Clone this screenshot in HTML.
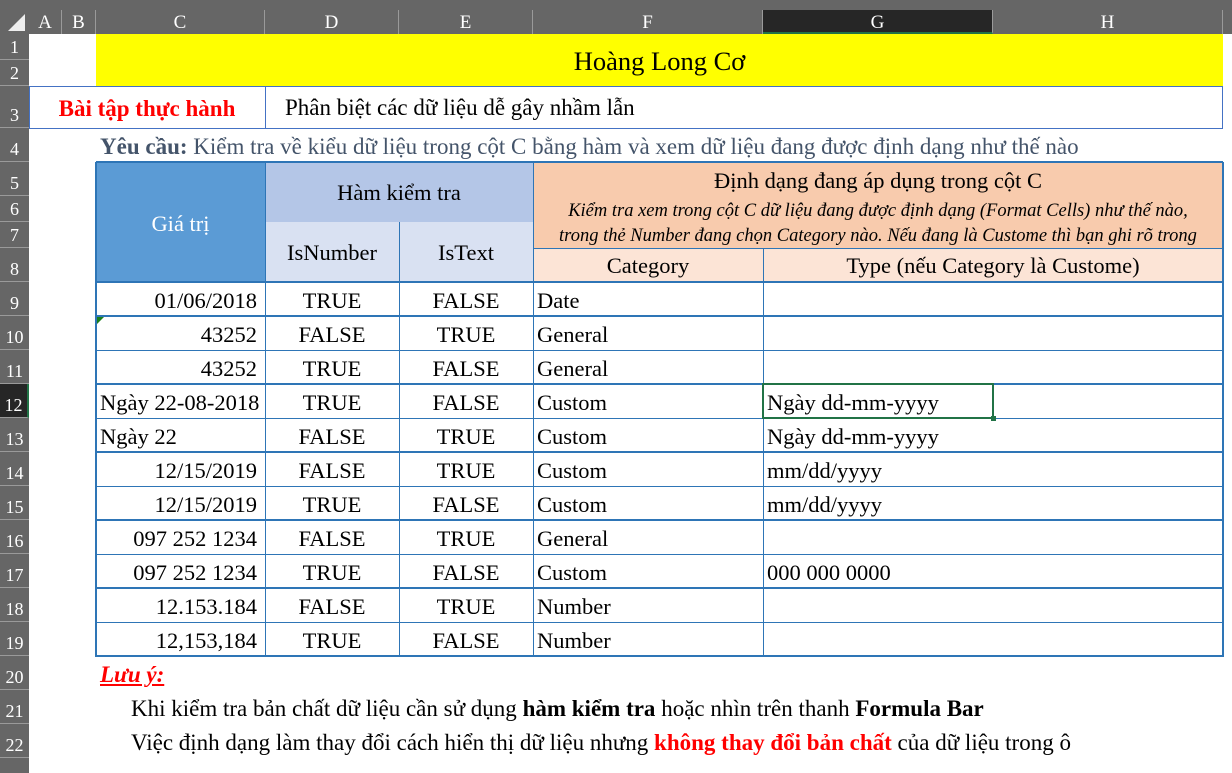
<!DOCTYPE html>
<html><head><meta charset="utf-8"><style>
html,body{margin:0;width:1232px;height:773px;overflow:hidden;}
body{background:#fff;position:relative;font-family:"Liberation Serif",serif;}
div{position:absolute;box-sizing:border-box;}
.ch{top:10px;height:24px;color:#fff;font-size:19px;text-align:center;line-height:26px;border-right:1px solid #9a9a9a;}
.rh{left:0;width:29px;color:#fff;font-size:18px;text-align:center;border-bottom:1px solid #9a9a9a;display:flex;align-items:flex-end;justify-content:center;padding-bottom:1px;}
.c{font-size:22.5px;color:#000;line-height:36px;white-space:nowrap;}
.ctr{text-align:center;}
.r{text-align:right;padding-right:8px;}
.l{padding-left:4px;}
.hl{left:96px;width:1127px;background:#2e75b6;}
.vl{width:1px;background:#2e75b6;}
</style></head><body>
<div style="left:0;top:0;width:1232px;height:34px;background:#666;"></div>
<div style="left:0;top:0;width:29px;height:773px;background:#666;"></div>
<svg style="position:absolute;left:8px;top:14px" width="18" height="18"><polygon points="17,0 17,17 0,17" fill="#eee"/></svg>
<div class="ch" style="left:29px;width:33px;">A</div>
<div class="ch" style="left:62px;width:34px;">B</div>
<div class="ch" style="left:96px;width:169px;">C</div>
<div class="ch" style="left:265px;width:134px;">D</div>
<div class="ch" style="left:399px;width:134px;">E</div>
<div class="ch" style="left:533px;width:230px;">F</div>
<div class="ch" style="left:763px;width:230px;background:#262626;border-bottom:2px solid #217346;">G</div>
<div class="ch" style="left:993px;width:230px;">H</div>
<div class="rh" style="top:34px;height:26px">1</div>
<div class="rh" style="top:60px;height:26px">2</div>
<div class="rh" style="top:86px;height:42px">3</div>
<div class="rh" style="top:128px;height:34px">4</div>
<div class="rh" style="top:162px;height:34px">5</div>
<div class="rh" style="top:196px;height:26px">6</div>
<div class="rh" style="top:222px;height:26px">7</div>
<div class="rh" style="top:248px;height:34px">8</div>
<div class="rh" style="top:282px;height:34px">9</div>
<div class="rh" style="top:316px;height:34px">10</div>
<div class="rh" style="top:350px;height:34px">11</div>
<div class="rh" style="top:384px;height:34px;background:#262626;border-right:2px solid #217346">12</div>
<div class="rh" style="top:418px;height:34px">13</div>
<div class="rh" style="top:452px;height:34px">14</div>
<div class="rh" style="top:486px;height:34px">15</div>
<div class="rh" style="top:520px;height:34px">16</div>
<div class="rh" style="top:554px;height:34px">17</div>
<div class="rh" style="top:588px;height:34px">18</div>
<div class="rh" style="top:622px;height:34px">19</div>
<div class="rh" style="top:656px;height:34px">20</div>
<div class="rh" style="top:690px;height:34px">21</div>
<div class="rh" style="top:724px;height:34px">22</div>
<div class="rh" style="top:758px;height:15px;border-bottom:none"></div>

<div class="c ctr" style="left:96px;top:34px;width:1127px;height:52px;background:#ff0;font-size:26.5px;line-height:54px;">Hoàng Long Cơ</div>
<div style="left:29px;top:86px;width:1194px;height:43px;border:1px solid #4472c4;"></div>
<div style="left:265px;top:86px;width:1px;height:42px;background:#4472c4;"></div>
<div class="c ctr" style="left:29px;top:86px;width:236px;line-height:46px;color:#f00;font-weight:bold;font-size:23px;">Bài tập thực hành</div>
<div class="c" style="left:285px;top:86px;line-height:44px;font-size:23px;">Phân biệt các dữ liệu dễ gây nhầm lẫn</div>
<div class="c" style="left:100px;top:129px;line-height:36px;color:#44546a;font-size:23px;"><b>Yêu cầu:</b> Kiểm tra về kiểu dữ liệu trong cột C bằng hàm và xem dữ liệu đang được định dạng như thế nào</div>

<div class="c ctr" style="left:96px;top:162px;width:169px;height:120px;background:#5b9bd5;color:#fff;line-height:124px;">Giá trị</div>
<div class="c ctr" style="left:265px;top:162px;width:268px;height:60px;background:#b4c6e7;line-height:62px;">Hàm kiểm tra</div>
<div class="c ctr" style="left:265px;top:222px;width:134px;height:60px;background:#d9e1f2;line-height:62px;">IsNumber</div>
<div class="c ctr" style="left:399px;top:222px;width:134px;height:60px;background:#d9e1f2;line-height:62px;">IsText</div>
<div style="left:533px;top:162px;width:690px;height:86px;background:#f8cbad;"></div>
<div class="c ctr" style="left:533px;top:164px;width:690px;line-height:34px;">Định dạng đang áp dụng trong cột C</div>
<div class="c ctr" style="left:533px;top:198px;width:690px;line-height:26px;font-size:18.5px;font-style:italic;">Kiểm tra xem trong cột C dữ liệu đang được định dạng (Format Cells) như thế nào,</div>
<div class="c ctr" style="left:533px;top:223px;width:690px;line-height:26px;font-size:18.5px;font-style:italic;">trong thẻ Number đang chọn Category nào. Nếu đang là Custome thì bạn ghi rõ trong</div>
<div class="c ctr" style="left:533px;top:248px;width:230px;height:34px;background:#fce4d6;">Category</div>
<div class="c ctr" style="left:763px;top:248px;width:460px;height:34px;background:#fce4d6;">Type (nếu Category là Custome)</div>

<div class="hl" style="top:161px;height:2px"></div>
<div class="hl" style="left:533px;width:690px;top:248px;height:1px"></div>
<div class="hl" style="top:281px;height:2px"></div>
<div class="hl" style="top:315px;height:2px"></div>
<div class="hl" style="top:350px;height:1px"></div>
<div class="hl" style="top:383px;height:2px"></div>
<div class="hl" style="top:418px;height:1px"></div>
<div class="hl" style="top:451px;height:2px"></div>
<div class="hl" style="top:486px;height:1px"></div>
<div class="hl" style="top:519px;height:2px"></div>
<div class="hl" style="top:554px;height:1px"></div>
<div class="hl" style="top:587px;height:2px"></div>
<div class="hl" style="top:622px;height:1px"></div>
<div class="hl" style="top:655px;height:2px"></div>
<div class="vl" style="left:95px;top:162px;height:495px;width:2px"></div>
<div class="vl" style="left:265px;top:162px;height:495px"></div>
<div class="vl" style="left:399px;top:222px;height:435px"></div>
<div class="vl" style="left:533px;top:162px;height:495px"></div>
<div class="vl" style="left:763px;top:248px;height:409px"></div>
<div class="vl" style="left:1222px;top:162px;height:495px;width:2px"></div>

<div class="c r" style="left:96px;top:283px;width:169px">01/06/2018</div>
<div class="c r" style="left:96px;top:317px;width:169px">43252</div>
<div class="c r" style="left:96px;top:351px;width:169px">43252</div>
<div class="c l" style="left:96px;top:385px;width:169px">Ngày 22-08-2018</div>
<div class="c l" style="left:96px;top:419px;width:169px">Ngày 22</div>
<div class="c r" style="left:96px;top:453px;width:169px">12/15/2019</div>
<div class="c r" style="left:96px;top:487px;width:169px">12/15/2019</div>
<div class="c r" style="left:96px;top:521px;width:169px">097 252 1234</div>
<div class="c r" style="left:96px;top:555px;width:169px">097 252 1234</div>
<div class="c r" style="left:96px;top:589px;width:169px">12.153.184</div>
<div class="c r" style="left:96px;top:623px;width:169px">12,153,184</div>
<svg style="position:absolute;left:97px;top:317px" width="8" height="8"><polygon points="0,0 7,0 0,7" fill="#1a7f1a"/></svg>

<div class="c ctr" style="left:265px;top:283px;width:134px">TRUE</div>
<div class="c ctr" style="left:265px;top:317px;width:134px">FALSE</div>
<div class="c ctr" style="left:265px;top:351px;width:134px">TRUE</div>
<div class="c ctr" style="left:265px;top:385px;width:134px">TRUE</div>
<div class="c ctr" style="left:265px;top:419px;width:134px">FALSE</div>
<div class="c ctr" style="left:265px;top:453px;width:134px">FALSE</div>
<div class="c ctr" style="left:265px;top:487px;width:134px">TRUE</div>
<div class="c ctr" style="left:265px;top:521px;width:134px">FALSE</div>
<div class="c ctr" style="left:265px;top:555px;width:134px">TRUE</div>
<div class="c ctr" style="left:265px;top:589px;width:134px">FALSE</div>
<div class="c ctr" style="left:265px;top:623px;width:134px">TRUE</div>

<div class="c ctr" style="left:399px;top:283px;width:134px">FALSE</div>
<div class="c ctr" style="left:399px;top:317px;width:134px">TRUE</div>
<div class="c ctr" style="left:399px;top:351px;width:134px">FALSE</div>
<div class="c ctr" style="left:399px;top:385px;width:134px">FALSE</div>
<div class="c ctr" style="left:399px;top:419px;width:134px">TRUE</div>
<div class="c ctr" style="left:399px;top:453px;width:134px">TRUE</div>
<div class="c ctr" style="left:399px;top:487px;width:134px">FALSE</div>
<div class="c ctr" style="left:399px;top:521px;width:134px">TRUE</div>
<div class="c ctr" style="left:399px;top:555px;width:134px">FALSE</div>
<div class="c ctr" style="left:399px;top:589px;width:134px">TRUE</div>
<div class="c ctr" style="left:399px;top:623px;width:134px">FALSE</div>

<div class="c l" style="left:533px;top:283px">Date</div>
<div class="c l" style="left:533px;top:317px">General</div>
<div class="c l" style="left:533px;top:351px">General</div>
<div class="c l" style="left:533px;top:385px">Custom</div>
<div class="c l" style="left:533px;top:419px">Custom</div>
<div class="c l" style="left:533px;top:453px">Custom</div>
<div class="c l" style="left:533px;top:487px">Custom</div>
<div class="c l" style="left:533px;top:521px">General</div>
<div class="c l" style="left:533px;top:555px">Custom</div>
<div class="c l" style="left:533px;top:589px">Number</div>
<div class="c l" style="left:533px;top:623px">Number</div>

<div class="c l" style="left:763px;top:385px">Ngày dd-mm-yyyy</div>
<div class="c l" style="left:763px;top:419px">Ngày dd-mm-yyyy</div>
<div class="c l" style="left:763px;top:453px">mm/dd/yyyy</div>
<div class="c l" style="left:763px;top:487px">mm/dd/yyyy</div>
<div class="c l" style="left:763px;top:555px">000 000 0000</div>
<div style="left:762px;top:383px;width:232px;height:36px;border:2px solid #217346;"></div>
<div style="left:991px;top:416px;width:5px;height:5px;background:#217346;"></div>

<div class="c" style="left:100px;top:657px;color:#f00;font-weight:bold;font-style:italic;text-decoration:underline;font-size:23px;">Lưu ý:</div>
<div class="c" style="left:131px;top:691px;font-size:23px;">Khi kiểm tra bản chất dữ liệu cần sử dụng <b>hàm kiểm tra</b> hoặc nhìn trên thanh <b>Formula Bar</b></div>
<div class="c" style="left:131px;top:725px;font-size:23px;">Việc định dạng làm thay đổi cách hiển thị dữ liệu nhưng <b style="color:#f00">không thay đổi bản chất</b> của dữ liệu trong ô</div>
</body></html>
